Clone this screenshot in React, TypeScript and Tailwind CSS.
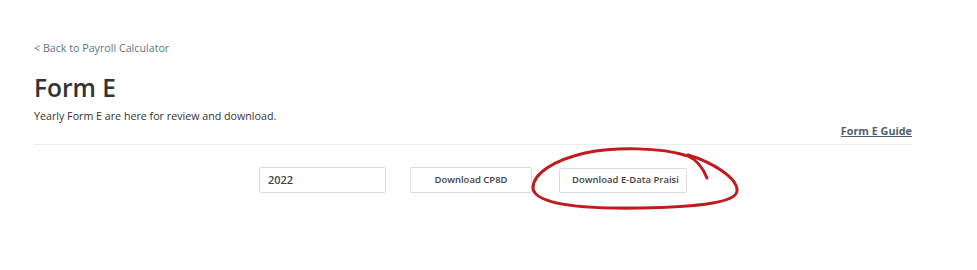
export default function App() {
  return (
    <div className="relative w-[977px] h-[270px] bg-white font-['Open_Sans',sans-serif] text-[#333]">
      <div className="px-[34px] pt-[40px] w-[946px]">
        <a href="#" className="block text-[10.7px] leading-[16px] text-[#5f7386]">
          &lt; Back to Payroll Calculator
        </a>
        <h1 className="mt-[16px] text-[24.5px] leading-[32px] font-semibold text-[#333]">Form E</h1>
        <p className="mt-[4px] text-[10.7px] leading-[16px] text-[#333]">
          Yearly Form E are here for review and download.
        </p>
        <div className="flex justify-end -mt-[1px]">
          <a href="#" className="text-[10.8px] leading-[16px] font-bold underline text-[#4f5f6e]">
            Form E Guide
          </a>
        </div>
        <div className="mt-[5px] border-t border-[#ececec]" />
        <div className="mt-[22px] flex justify-center items-center">
          <div className="w-[127px] h-[26px] border border-[#dcdcdc] rounded-[2px] pl-[8px] flex items-center text-[11px] font-semibold text-[#444]">
            2022
          </div>
          <button className="ml-[24px] w-[122px] h-[26px] border border-[#dcdcdc] rounded-[2px] bg-white text-[9.5px] font-semibold text-[#444]">
            Download CP8D
          </button>
          <button className="ml-[27px] w-[128px] h-[25px] border border-[#dcdcdc] rounded-[2px] bg-white text-[9.5px] font-semibold text-[#444] overflow-hidden whitespace-nowrap text-left pl-[12px]">
            Download E-Data Praisi
          </button>
        </div>
      </div>
      <svg className="absolute left-0 top-0 pointer-events-none" width="977" height="270" viewBox="0 0 977 270">
        <path
          d="M 707 178 C 703 168, 697 160, 688 156 C 660 147, 615 147, 585 153 C 555 160, 533 173, 533 188 C 534 204, 580 209, 640 208 C 690 207, 736 204, 737 191 C 738 178, 712 162, 688 155"
          fill="none"
          stroke="#c11a1f"
          strokeWidth="3"
          strokeLinecap="round"
        />
      </svg>
    </div>
  );
}
